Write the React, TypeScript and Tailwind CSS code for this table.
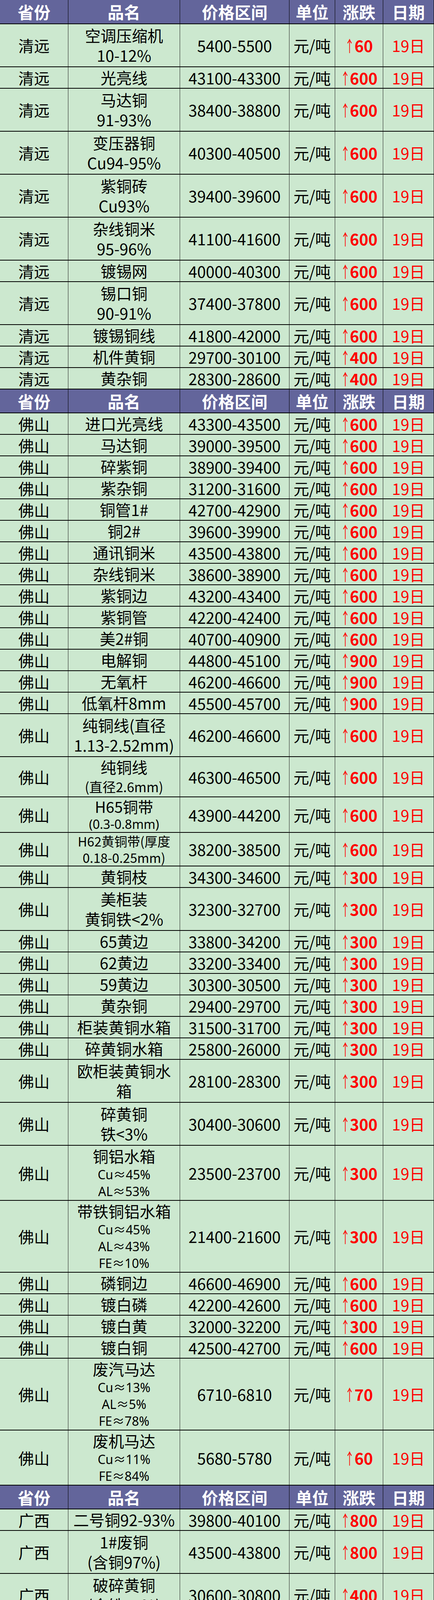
import React from "react";

type Line = [string, string];
type Row = { p: string; lines: Line[]; price: string; ch: string; h: string };

const M = "text-[40px] leading-[51px]";
const S = "text-[32px] leading-[43px] font-['Noto_Sans','Noto_Sans_CJK_SC',sans-serif]";
const S2 = "text-[34px] leading-[50px]";
const H65 = "text-[39px] leading-[47px]";
const H62 = "text-[33px] leading-[42px]";

const r = (p: string, lines: Line[], price: string, ch: string, h = "h-[55px]"): Row => ({ p, lines, price, ch, h });
const m = (t: string): Line => [t, M];
const s = (t: string): Line => [t, S];

const qingyuan: Row[] = [
  r("清远", [m("空调压缩机"), m("10-12%")], "5400-5500", "60", "h-[110px]"),
  r("清远", [m("光亮线")], "43100-43300", "600"),
  r("清远", [m("马达铜"), m("91-93%")], "38400-38800", "600", "h-[110px]"),
  r("清远", [m("变压器铜"), m("Cu94-95%")], "40300-40500", "600", "h-[110px]"),
  r("清远", [m("紫铜砖"), m("Cu93%")], "39400-39600", "600", "h-[110px]"),
  r("清远", [m("杂线铜米"), m("95-96%")], "41100-41600", "600", "h-[110px]"),
  r("清远", [m("镀锡网")], "40000-40300", "600"),
  r("清远", [m("锡口铜"), m("90-91%")], "37400-37800", "600", "h-[110px]"),
  r("清远", [m("镀锡铜线")], "41800-42000", "600"),
  r("清远", [m("机件黄铜")], "29700-30100", "400"),
  r("清远", [m("黄杂铜")], "28300-28600", "400"),
];

const foshan: Row[] = [
  r("佛山", [m("进口光亮线")], "43300-43500", "600"),
  r("佛山", [m("马达铜")], "39000-39500", "600"),
  r("佛山", [m("碎紫铜")], "38900-39400", "600"),
  r("佛山", [m("紫杂铜")], "31200-31600", "600"),
  r("佛山", [m("铜管1#")], "42700-42900", "600"),
  r("佛山", [m("铜2#")], "39600-39900", "600"),
  r("佛山", [m("通讯铜米")], "43500-43800", "600"),
  r("佛山", [m("杂线铜米")], "38600-38900", "600"),
  r("佛山", [m("紫铜边")], "43200-43400", "600"),
  r("佛山", [m("紫铜管")], "42200-42400", "600"),
  r("佛山", [m("美2#铜")], "40700-40900", "600"),
  r("佛山", [m("电解铜")], "44800-45100", "900"),
  r("佛山", [m("无氧杆")], "46200-46600", "900"),
  r("佛山", [m("低氧杆8mm")], "45500-45700", "900"),
  r("佛山", [m("纯铜线(直径"), m("1.13-2.52mm)")], "46200-46600", "600", "h-[110px]"),
  r("佛山", [m("纯铜线"), ["(直径2.6mm)", S2]], "46300-46500", "600", "h-[103px]"),
  r("佛山", [["H65铜带", H65], s("(0.3-0.8mm)")], "43900-44200", "600", "h-[91px]"),
  r("佛山", [["H62黄铜带(厚度", H62], ["0.18-0.25mm)", H62]], "38200-38500", "600", "h-[86px]"),
  r("佛山", [m("黄铜枝")], "34300-34600", "300"),
  r("佛山", [m("美柜装"), m("黄铜铁<2%")], "32300-32700", "300", "h-[110px]"),
  r("佛山", [m("65黄边")], "33800-34200", "300"),
  r("佛山", [m("62黄边")], "33200-33400", "300"),
  r("佛山", [m("59黄边")], "30300-30500", "300"),
  r("佛山", [m("黄杂铜")], "29400-29700", "300"),
  r("佛山", [m("柜装黄铜水箱")], "31500-31700", "300"),
  r("佛山", [m("碎黄铜水箱")], "25800-26000", "300"),
  r("佛山", [m("欧柜装黄铜水"), m("箱")], "28100-28300", "300", "h-[110px]"),
  r("佛山", [m("碎黄铜"), m("铁<3%")], "30400-30600", "300", "h-[110px]"),
  r("佛山", [m("铜铝水箱"), s("Cu≈45%"), s("AL≈53%")], "23500-23700", "300", "h-[141px]"),
  r("佛山", [m("带铁铜铝水箱"), s("Cu≈45%"), s("AL≈43%"), s("FE≈10%")], "21400-21600", "300", "h-[184px]"),
  r("佛山", [m("磷铜边")], "46600-46900", "600"),
  r("佛山", [m("镀白磷")], "42200-42600", "600"),
  r("佛山", [m("镀白黄")], "32000-32200", "300"),
  r("佛山", [m("镀白铜")], "42500-42700", "600"),
  r("佛山", [m("废汽马达"), s("Cu≈13%"), s("AL≈5%"), s("FE≈78%")], "6710-6810", "70", "h-[184px]"),
  r("佛山", [m("废机马达"), s("Cu≈11%"), s("FE≈84%")], "5680-5780", "60", "h-[141px]"),
];

const guangxi: Row[] = [
  r("广西", [m("二号铜92-93%")], "39800-40100", "800"),
  r("广西", [m("1#废铜"), m("(含铜97%)")], "43500-43800", "800", "h-[110px]"),
  r("广西", [m("破碎黄铜"), m("(含铁<4%)")], "30600-30800", "400", "h-[110px]"),
  r("广西", [m("黄杂铜(进口)")], "23700-23900", "400"),
  r("广西", [m("1#光亮铜线")], "43500-43700", "800"),
];

const GRID = "grid grid-cols-[175px_286px_280px_117px_123px_130px]";
const CELL = "flex items-center justify-center border-r border-[#222] text-center";

function Header({ h }: { h: string }) {
  const titles = ["省份", "品名", "价格区间", "单位", "涨跌", "日期"];
  return (
    <div className={`${GRID} ${h} bg-[#63659b] border-b-2 border-black`}>
      {titles.map((t) => (
        <div key={t} className={`${CELL} border-black text-white font-bold text-[42px] leading-[50px]`}>
          {t}
        </div>
      ))}
    </div>
  );
}

function DataRow({ row }: { row: Row }) {
  return (
    <div className={`${GRID} ${row.h} bg-[#cce8cf] border-b-2 border-black text-black`}>
      <div className={`${CELL} text-[40px] leading-[50px]`}>{row.p}</div>
      <div className={`${CELL} flex-col`}>
        {row.lines.map(([t, c], i) => (
          <div key={i} className={`${c} whitespace-nowrap`}>
            {t}
          </div>
        ))}
      </div>
      <div className={`${CELL} text-[40px] leading-[50px]`}>{row.price}</div>
      <div className={`${CELL} text-[40px] leading-[50px]`}>元/吨</div>
      <div className={`${CELL} text-[40px] leading-[50px] text-[#ff0000]`}>
        <span className="inline-block font-normal text-[40px] leading-[50px] scale-x-60 -mx-[8px]">↑</span>
        <span className="font-bold">{row.ch}</span>
      </div>
      <div className={`${CELL} text-[40px] leading-[50px] text-[#ff0000]`}>19日</div>
    </div>
  );
}

export default function App() {
  return (
    <div className="w-[1111px] bg-white font-['Noto_Sans_CJK_SC',sans-serif]">
      <Header h="h-[62px]" />
      {qingyuan.map((row, i) => (
        <DataRow key={"q" + i} row={row} />
      ))}
      <Header h="h-[61px]" />
      {foshan.map((row, i) => (
        <DataRow key={"f" + i} row={row} />
      ))}
      <Header h="h-[61px]" />
      {guangxi.map((row, i) => (
        <DataRow key={"g" + i} row={row} />
      ))}
    </div>
  );
}
